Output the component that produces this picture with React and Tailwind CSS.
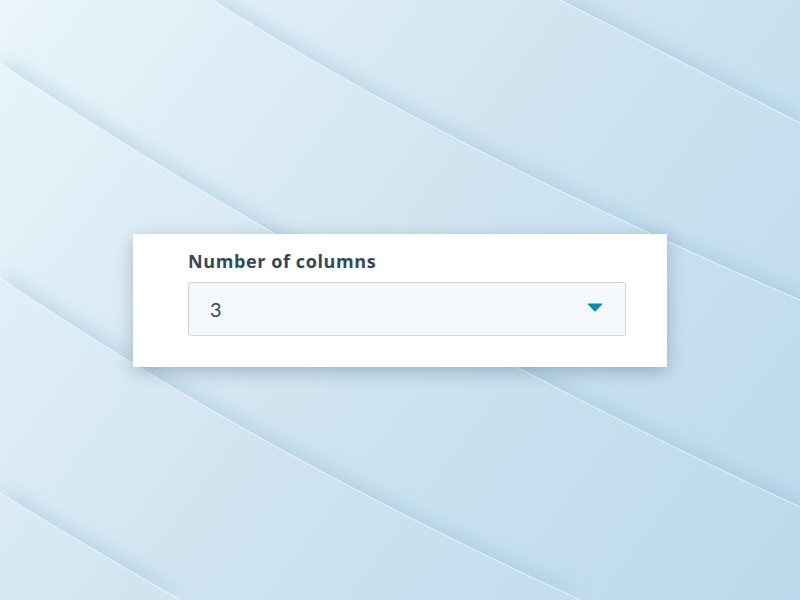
import React from "react";

function Background() {
  const shadow = "url(#edgeShadow)";
  const layers = [
    "M560,0 C640,40 720,82 800,123 L800,600 L0,600 L0,0 Z",
    "M213,0 C330,75 520,180 800,300 L800,600 L0,600 L0,0 Z",
    "M0,63 C150,165 450,345 800,507 L800,600 L0,600 Z",
    "M0,278 C130,365 300,470 580,600 L0,600 Z",
    "M0,493 C60,530 120,565 180,600 L0,600 Z",
  ];
  const edges = [
    "M560,0 C640,40 720,82 800,123",
    "M213,0 C330,75 520,180 800,300",
    "M0,63 C150,165 450,345 800,507",
    "M0,278 C130,365 300,470 580,600",
    "M0,493 C60,530 120,565 180,600",
  ];
  return (
    <svg
      className="absolute inset-0 h-full w-full"
      viewBox="0 0 800 600"
      preserveAspectRatio="none"
      aria-hidden="true"
    >
      <defs>
        <linearGradient id="bg" gradientUnits="userSpaceOnUse" x1="0" y1="0" x2="800" y2="600">
          <stop offset="0" stopColor="#eaf5fb" />
          <stop offset="0.5" stopColor="#cfe4f0" />
          <stop offset="1" stopColor="#bbd9ec" />
        </linearGradient>
        <filter id="edgeShadow" x="-20%" y="-20%" width="140%" height="140%">
          <feDropShadow dx="4" dy="-6" stdDeviation="9" floodColor="#7fb0cc" floodOpacity="0.32" />
        </filter>
      </defs>
      <rect x="0" y="0" width="800" height="600" fill="url(#bg)" />
      {layers.map((d, i) => (
        <g key={i}>
          <path d={d} fill="url(#bg)" filter={shadow} />
          <path d={edges[i]} fill="none" stroke="#ffffff" strokeOpacity="0.7" strokeWidth="1" />
        </g>
      ))}
    </svg>
  );
}

export default function App() {
  return (
    <div className="relative flex h-screen w-full items-center justify-center overflow-hidden bg-[#d0e5f1]">
      <Background />
      <div className="relative z-10 flex h-[133px] w-[534px] flex-col bg-white pl-[55px] pr-[41px] pt-[15px] shadow-[0_5px_16px_rgba(40,70,100,0.3)]">
        <div className="h-[24px] text-[18px] font-bold leading-[24px] tracking-[0.6px] text-[#33475b] [font-family:'Open_Sans',Lato,sans-serif]">
          Number of columns
        </div>
        <div className="mt-[9px] flex h-[54px] items-center justify-between rounded-[3px] border border-[#cbd6e2] bg-[#f5f8fa] pl-[21px] pr-[22px]">
          <span className="text-[20px] leading-none text-[#33475b] [font-family:Lato,'Open_Sans',sans-serif]">3</span>
          <svg width="16" height="9" viewBox="0 0 16 9" aria-hidden="true" className="mt-[-2px]">
            <path d="M1,0.5 L15,0.5 Q15.8,0.5 15.2,1.2 L8.7,8.2 Q8,8.9 7.3,8.2 L0.8,1.2 Q0.2,0.5 1,0.5 Z" fill="#0091ae" />
          </svg>
        </div>
      </div>
    </div>
  );
}
